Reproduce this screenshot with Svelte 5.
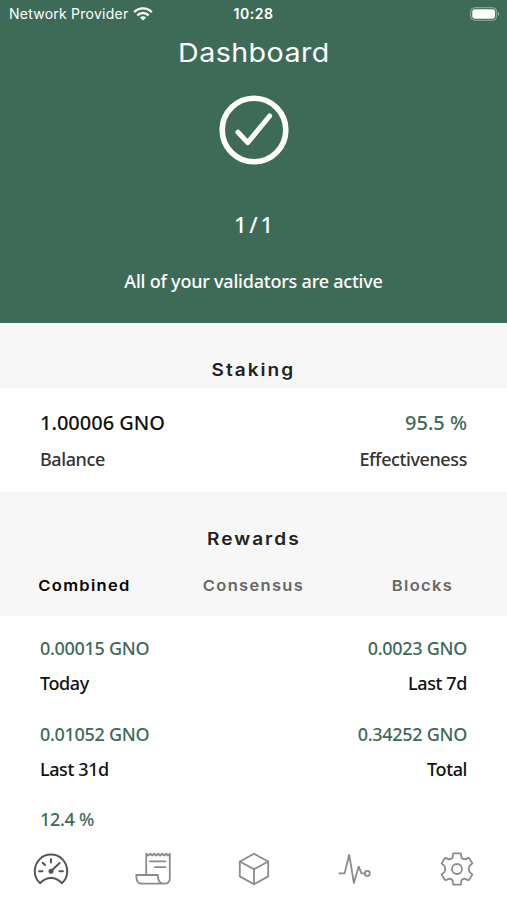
<script>
  const staking = [
    { value: "1.00006 GNO", label: "Balance" },
    { value: "95.5 %", label: "Effectiveness", green: true }
  ]

  const tabs = ["Combined", "Consensus", "Blocks"]
  let active = "Combined"

  const rewards = [
    { value: "0.00015 GNO", label: "Today" },
    { value: "0.0023 GNO", label: "Last 7d" },
    { value: "0.01052 GNO", label: "Last 31d" },
    { value: "0.34252 GNO", label: "Total" },
    { value: "12.4 %", label: "" }
  ]
</script>

<div class="screen">
  <header>
    <div class="status">
      <span class="provider">
        Network Provider
        <svg width="20" height="14" viewBox="0 0 20 14" fill="none" stroke="#fff" stroke-width="2.3">
          <path d="M1.2 5.1C6.2 .1 13.8 .1 18.8 5.1" />
          <path d="M4.3 8.3C7.5 5.2 12.5 5.2 15.7 8.3" />
          <path d="M10 13.4L6.9 10.4Q10 7.9 13.1 10.4Z" fill="#fff" stroke="none" />
        </svg>
      </span>
      <span class="time">10:28</span>
      <svg class="battery" width="32" height="16" viewBox="0 0 32 16">
        <rect x="1.7" y="1.7" width="26" height="12.6" rx="4" fill="none" stroke="#fff" stroke-opacity=".45" />
        <rect x="3.3" y="3.3" width="22.8" height="9.4" rx="2.4" fill="#fff" />
        <path d="M29 5.8Q31.2 8 29 10.2Z" fill="#fff" fill-opacity=".5" />
      </svg>
    </div>
    <h1>Dashboard</h1>
    <svg class="check" width="72" height="72" viewBox="0 0 72 72" fill="none" stroke="#fff" stroke-linecap="round" stroke-linejoin="round">
      <circle cx="36" cy="36" r="31.8" stroke-width="5.6" />
      <path d="M20 38.2L29.7 48.6L51.6 22" stroke-width="5" />
    </svg>
    <p class="count">1 / 1</p>
    <p class="message">All of your validators are active</p>
  </header>

  <h2 class="staking"><span>Staking</span></h2>
  <section class="grid top">
    {#each staking as item}
      <div class="item">
        <span class="value" class:green={item.green}>{item.value}</span>
        <span class="label">{item.label}</span>
      </div>
    {/each}
  </section>

  <div class="rewards-head">
    <h2><span>Rewards</span></h2>
    <div class="tabs">
      {#each tabs as tab}
        <button class:active={tab === active} on:click={() => (active = tab)}>{tab}</button>
      {/each}
    </div>
  </div>
  <section class="grid rewards">
    {#each rewards as item}
      <div class="item">
        <span class="value green">{item.value}</span>
        <span class="label">{item.label}</span>
      </div>
    {/each}
  </section>

  <nav>
    <a href="#dashboard" class="current" aria-label="Dashboard">
      <svg viewBox="0 0 36 36">
        <path d="M7.2 32.2C3.8 29.4 1.8 25.2 1.8 20.2C1.8 10.8 9 3.6 18 3.6S34.2 10.8 34.2 20.2C34.2 25.2 32.2 29.4 28.8 32.2C26 29 22 27 18 27S10 29 7.2 32.2Z" />
        <path d="M18 8.2V11.4M9.7 11.7L12 14M6.1 20.3H9.5M26.5 20.3H29.9M18 20.3L26.6 12" />
        <circle cx="18" cy="20.3" r="1.5" fill="#555" stroke="#555" />
      </svg>
    </a>
    <a href="#validators" aria-label="Validators">
      <svg viewBox="0 0 36 36">
        <path d="M11.2 24V2.7L13.2 4.5L15.2 2.8L17.2 4.5L19.2 2.8L21.2 4.5L23.2 2.8L25.2 4.5L27.2 2.8L29.2 4.5L31.2 2.8L33.2 4.5L34.8 2.8V27.5Q34.8 32.7 29.2 32.7H6.4Q1.2 32.7 1.2 24H22.8Q22.8 32.7 28.8 32.7Q34.8 32.7 34.8 27.5" />
        <path d="M14.8 10.4H30.4M20 16.2H30.4" />
      </svg>
    </a>
    <a href="#blocks" aria-label="Blocks">
      <svg viewBox="0 0 36 36">
        <path d="M18 2.8L32.2 10.5V25.4L18 33.2L3.8 25.4V10.5ZM3.8 10.5L18 18.2L32.2 10.5M18 18.2V33.2" />
      </svg>
    </a>
    <a href="#activity" aria-label="Activity">
      <svg viewBox="0 0 36 36">
        <path d="M2.4 22.4H7.6L12.2 3.8L16.9 32L21.7 15.6L24.5 22.4H27.5" />
        <circle cx="30.3" cy="22.4" r="2.5" />
      </svg>
    </a>
    <a href="#settings" aria-label="Settings">
      <svg viewBox="0 0 36 36">
        <path d="M14.2 2.4H21.8L22.4 6.6Q25 9.8 28.8 7L30.2 7.2L33.4 12.4L30.4 15.2Q28.9 18 30.4 20.8L33.4 23.6L30.2 28.8L28.8 29Q25 26.2 22.4 29.4L21.8 33.6H14.2L13.6 29.4Q11 26.2 7.2 29L5.8 28.8L2.6 23.6L5.6 20.8Q7.1 18 5.6 15.2L2.6 12.4L5.8 7.2L7.2 7Q11 9.8 13.6 6.6Z" />
        <circle cx="18" cy="18" r="5" />
      </svg>
    </a>
  </nav>
</div>

<style>
:global(body) {
  margin: 0;
}

.screen {
  display: flex;
  flex-direction: column;
  height: 900px;
  overflow: hidden;
  background: #fff;
  color: #111;
  font-family: "Noto Sans", sans-serif;
}

header {
  display: flex;
  flex-direction: column;
  align-items: center;
  box-sizing: border-box;
  height: 323px;
  background: #3d6b58;
  color: #fff;
}

.status {
  display: grid;
  grid-template-columns: 1fr auto 1fr;
  align-items: center;
  box-sizing: border-box;
  width: 100%;
  height: 27px;
  padding: 0 6px 0 9px;
  font: 500 14px/27px Inter, sans-serif;
}

.provider {
  display: flex;
  align-items: center;
  gap: 5px;
  font-weight: 400;
  letter-spacing: 0.24px;
}

.time {
  padding-right: 3px;
  font-weight: 600;
  letter-spacing: 0.5px;
}

.battery {
  justify-self: end;
}

h1, h2, p {
  margin: 0;
}

h1 {
  height: 50px;
  font: 400 26px/52px Inter, sans-serif;
  letter-spacing: 0.4px;
  transform: scaleX(1.1);
}

.check {
  margin-top: 17px;
}

.count {
  margin-top: 41px;
  font-size: 22px;
  font-weight: 500;
  line-height: 34px;
  word-spacing: -3px;
}

.message {
  margin-top: 25px;
  font-size: 18px;
  font-weight: 500;
  line-height: 31px;
  letter-spacing: -0.22px;
}

h2 {
  font: 600 17px/24px Inter, sans-serif;
  letter-spacing: 1.8px;
  text-align: center;
  color: #222;
}

h2 span {
  display: inline-block;
  transform: scaleX(1.12);
}

.staking {
  box-sizing: border-box;
  height: 65px;
  padding-top: 35px;
  background: #f7f7f7;
}

.grid {
  display: grid;
  grid-template-columns: 1fr 1fr;
  box-sizing: border-box;
  padding: 0 40px;
}

.item {
  display: flex;
  flex-direction: column;
  white-space: nowrap;
}

.item:nth-child(even) {
  align-items: flex-end;
}

.value,
.label {
  font-size: 18px;
  font-weight: 500;
  line-height: 35px;
  letter-spacing: -0.3px;
}

.label {
  line-height: 34px;
  letter-spacing: -0.4px;
}

.green {
  color: #3d6b58;
}

.top {
  height: 104px;
  padding-top: 17px;
}

.top .value {
  font-size: 20px;
  line-height: 36px;
  letter-spacing: 0;
}

.top .label {
  line-height: 36px;
  color: #333;
}

.rewards-head {
  box-sizing: border-box;
  height: 124px;
  padding-top: 35px;
  background: #f7f7f7;
}

.tabs {
  display: grid;
  grid-template-columns: repeat(3, 1fr);
  margin-top: 23px;
}

button {
  padding: 0;
  border: 0;
  background: none;
  color: #666;
  font: 600 15px/24px Inter, sans-serif;
  letter-spacing: 1.2px;
  transform: scaleX(1.1);
}

button.active {
  color: #000;
}

.rewards {
  grid-auto-rows: 85.5px;
  flex: 1;
  min-height: 0;
  padding-top: 15px;
  overflow: hidden;
}

nav {
  display: grid;
  grid-template-columns: repeat(5, 1fr);
  flex: none;
  height: 61px;
  background: #fff;
}

nav a {
  display: flex;
  justify-content: center;
  padding: 12px 0 0 1px;
}

nav svg {
  width: 36px;
  height: 36px;
  fill: none;
  stroke: #8b8b8b;
  stroke-width: 1.8;
  stroke-linecap: round;
  stroke-linejoin: round;
}

nav .current svg {
  stroke: #555;
  stroke-width: 2;
}
</style>
